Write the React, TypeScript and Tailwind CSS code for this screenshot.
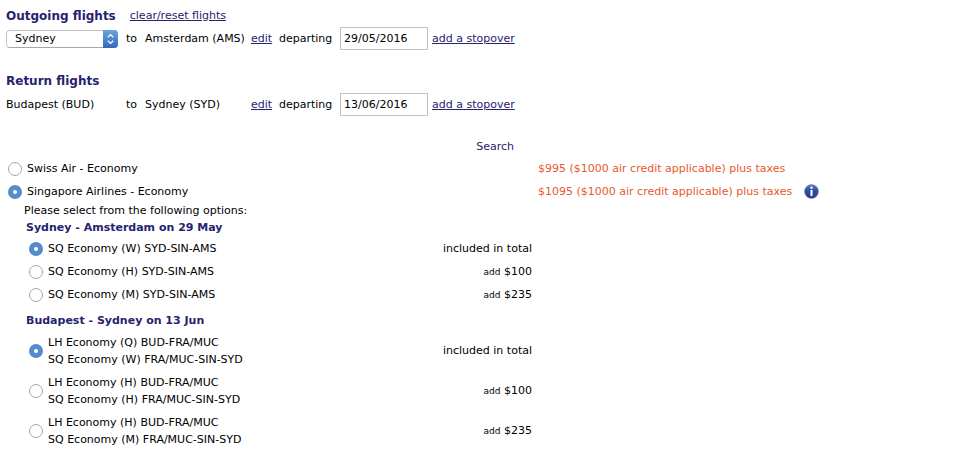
import { useState } from "react";

const radioClass =
  "m-0 size-3.5 shrink-0 cursor-pointer appearance-none rounded-full border border-[#a6a6a6] bg-white checked:border-[5px] checked:border-[#558ccb]";
const linkClass = "text-[#26236f] underline";

type FlightRowProps = {
  from: string;
  to: string;
  date: string;
  name: string;
  selectable?: boolean;
};

function FlightRow({ from, to, date, name, selectable }: FlightRowProps) {
  return (
    <div className="flex h-[29px] items-center whitespace-nowrap">
      <div className="w-[120px] shrink-0">
        {selectable ? (
          <div className="relative h-[18px] w-28">
            <select
              aria-label="Departure city"
              defaultValue={from}
              className="block h-full w-full appearance-none rounded-sm border border-[#c4c4c4] border-b-[#a8a8a8] bg-white pl-2 text-[11px] text-black"
            >
              <option>{from}</option>
              <option>Melbourne</option>
              <option>Brisbane</option>
            </select>
            <span className="pointer-events-none absolute inset-y-0 right-0 flex w-[15px] items-center justify-center rounded-r-sm bg-linear-to-b from-[#69a5dc] to-[#3268bd]">
              <svg width="7" height="12" viewBox="0 0 7 12" fill="none" stroke="white" strokeWidth="1.3" aria-hidden="true">
                <path d="M.8 4.3 3.5 1.6 6.2 4.3M.8 7.7 3.5 10.4 6.2 7.7" />
              </svg>
            </span>
          </div>
        ) : (
          from
        )}
      </div>
      <span className="w-[19px] shrink-0">to</span>
      <span className="w-[106px] shrink-0">{to}</span>
      <a href="#edit" className={`w-7 shrink-0 ${linkClass}`}>
        edit
      </a>
      <label htmlFor={name} className="w-[61px] shrink-0">
        departing
      </label>
      <input
        id={name}
        type="text"
        defaultValue={date}
        className="h-[23px] w-[88px] shrink-0 border border-[#c3c3c3] bg-white px-[3px] text-[11px]"
      />
      <a href="#stopover" className={`ml-1 ${linkClass}`}>
        add a stopover
      </a>
    </div>
  );
}

type Option = { id: string; lines: string[]; extra?: string };

const outbound: Option[] = [
  { id: "out-w", lines: ["SQ Economy (W) SYD-SIN-AMS"] },
  { id: "out-h", lines: ["SQ Economy (H) SYD-SIN-AMS"], extra: "$100" },
  { id: "out-m", lines: ["SQ Economy (M) SYD-SIN-AMS"], extra: "$235" },
];

const inbound: Option[] = [
  { id: "in-w", lines: ["LH Economy (Q) BUD-FRA/MUC", "SQ Economy (W) FRA/MUC-SIN-SYD"] },
  { id: "in-h", lines: ["LH Economy (H) BUD-FRA/MUC", "SQ Economy (H) FRA/MUC-SIN-SYD"], extra: "$100" },
  { id: "in-m", lines: ["LH Economy (H) BUD-FRA/MUC", "SQ Economy (M) FRA/MUC-SIN-SYD"], extra: "$235" },
];

function OptionGroup({ name, options }: { name: string; options: Option[] }) {
  const [selected, setSelected] = useState(options[0].id);
  return (
    <>
      {options.map((option) => (
        <div
          key={option.id}
          className={`flex w-full max-w-[526px] items-center pl-[23px] ${option.lines.length > 1 ? "h-10" : "h-[23px]"}`}
        >
          <input
            id={option.id}
            type="radio"
            name={name}
            checked={selected === option.id}
            onChange={() => setSelected(option.id)}
            className={radioClass}
          />
          <label htmlFor={option.id} className="ml-[5px] leading-[17px]">
            {option.lines.map((line) => (
              <span key={line} className="block">
                {line}
              </span>
            ))}
          </label>
          <span className="ml-auto">
            {option.extra ? (
              <>
                <span className="text-[9px]">add</span> {option.extra}
              </>
            ) : (
              "included in total"
            )}
          </span>
        </div>
      ))}
    </>
  );
}

const airlines = [
  { id: "swiss", label: "Swiss Air - Economy", price: "$995 ($1000 air credit applicable) plus taxes" },
  { id: "singapore", label: "Singapore Airlines - Economy", price: "$1095 ($1000 air credit applicable) plus taxes" },
];

export default function App() {
  const [airline, setAirline] = useState("singapore");
  return (
    <main className="bg-white px-1.5 pt-[7px] font-['DejaVu_Sans',Verdana,sans-serif] text-[11px] leading-4 text-black">
      <section>
        <div className="flex h-[17px] items-center gap-3.5">
          <h2 className="text-xs font-bold text-[#26236f]">Outgoing flights</h2>
          <a href="#reset" className={linkClass}>
            clear/reset flights
          </a>
        </div>
        <FlightRow from="Sydney" to="Amsterdam (AMS)" date="29/05/2016" name="outgoing-date" selectable />
      </section>

      <section className="mt-5">
        <h2 className="h-[17px] text-xs leading-[17px] font-bold text-[#26236f]">Return flights</h2>
        <FlightRow from="Budapest (BUD)" to="Sydney (SYD)" date="13/06/2016" name="return-date" />
      </section>

      <div className="mt-5 flex max-w-[508px] justify-end">
        <button type="button" className="cursor-pointer text-[#26236f]">
          Search
        </button>
      </div>

      <section className="mt-0.5">
        {airlines.map((item) => (
          <div key={item.id} className="flex h-[23px] items-center whitespace-nowrap">
            <div className="flex w-[532px] items-center gap-[5px] pl-0.5">
              <input
                id={item.id}
                type="radio"
                name="airline"
                checked={airline === item.id}
                onChange={() => setAirline(item.id)}
                className={radioClass}
              />
              <label htmlFor={item.id}>{item.label}</label>
            </div>
            <span className="text-[#e8592b]">{item.price}</span>
            {item.id === "singapore" && (
              <button type="button" aria-label="Fare information" className="ml-3 cursor-pointer">
                <svg width="15" height="15" viewBox="0 0 15 15" aria-hidden="true">
                  <defs>
                    <linearGradient id="info-fill" x1="0" y1="0" x2="0" y2="1">
                      <stop offset="0" stopColor="#5877b8" />
                      <stop offset="0.5" stopColor="#2b4b9b" />
                      <stop offset="1" stopColor="#203b86" />
                    </linearGradient>
                  </defs>
                  <circle cx="7.5" cy="7.5" r="7" fill="url(#info-fill)" stroke="#8195c4" strokeWidth="0.6" />
                  <circle cx="7.5" cy="3.8" r="1.2" fill="white" />
                  <path d="M6.5 6h2v6h-2z" fill="white" />
                </svg>
              </button>
            )}
          </div>
        ))}
        <p className="h-4 pl-[18px] leading-[15px]">Please select from the following options:</p>
        <h3 className="h-[18px] pl-5 leading-[18px] font-bold text-[#26236f]">Sydney - Amsterdam on 29 May</h3>
        <OptionGroup name="outbound" options={outbound} />
        <h3 className="mt-1.5 mb-px h-[18px] pl-5 leading-[18px] font-bold text-[#26236f]">Budapest - Sydney on 13 Jun</h3>
        <OptionGroup name="inbound" options={inbound} />
      </section>
    </main>
  );
}
